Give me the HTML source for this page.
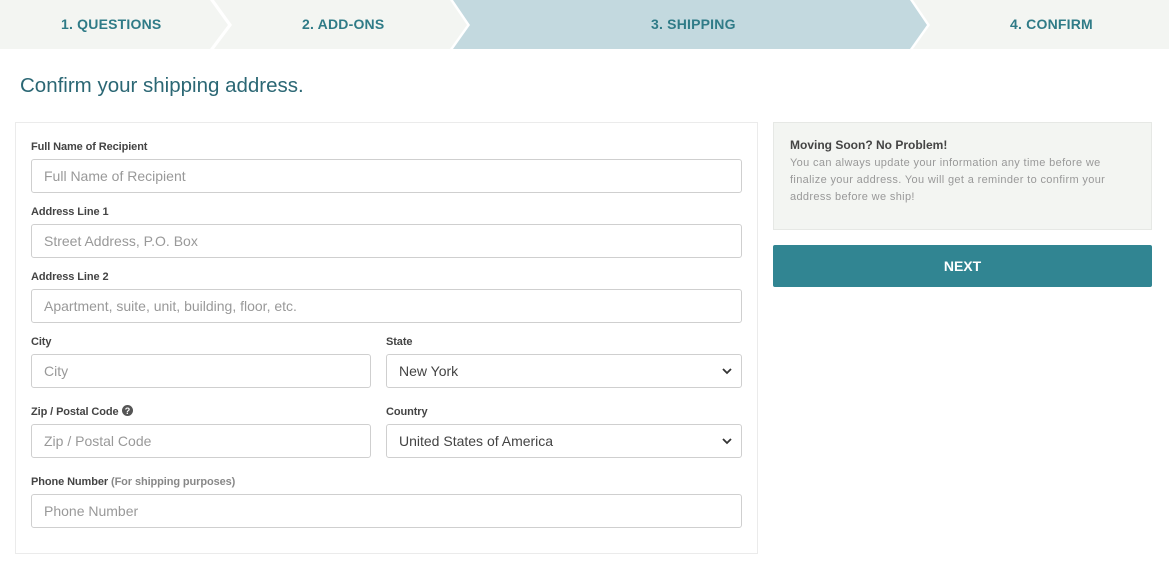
<!DOCTYPE html>
<html><head><style>
*{box-sizing:border-box;margin:0;padding:0}
body{width:1169px;height:561px;background:#fff;font-family:"Liberation Sans",sans-serif;position:relative;overflow:hidden}
.tabs{position:absolute;left:0;top:0;width:1169px;height:49px}
.tl{position:absolute;top:0;height:49px;line-height:49px;font-weight:bold;font-size:14px;color:#2f7b87;letter-spacing:0.2px}
.card{position:absolute;left:15px;top:122px;width:743px;height:432px;border:1px solid #ebebeb}
.lab{position:absolute;font-size:11px;color:#444;font-weight:bold;letter-spacing:-0.1px}
.lab span{color:#888;font-weight:bold}
.inp{position:absolute;height:34px;border:1px solid #cfcfcf;border-radius:3px;font-size:14px;color:#999;padding-left:12px;line-height:32px}
.sel{color:#444}
.sel svg{position:absolute;right:9px;top:12px}
h1{position:absolute;left:20px;top:74px;font-weight:normal;font-size:20.5px;color:#2b6774}
</style></head><body>
<svg class="tabs" width="1169" height="49">
<polygon points="0,0 210,0 228,25 210,49 0,49" fill="#f3f5f2"/>
<polygon points="214,0 450,0 467,25 450,49 214,49 232,25" fill="#f3f5f2"/>
<polygon points="453,0 910,0 927,25 910,49 453,49 470,25" fill="#c3d9df"/>
<polygon points="913,0 1169,0 1169,49 913,49 930,25" fill="#f3f5f2"/>
</svg>
<div class="tl" style="left:61px">1. QUESTIONS</div>
<div class="tl" style="left:302px">2. ADD-ONS</div>
<div class="tl" style="left:651px">3. SHIPPING</div>
<div class="tl" style="left:1010px">4. CONFIRM</div>
<h1>Confirm your shipping address.</h1>
<div class="card"></div>
<div class="lab" style="left:31px;top:141px">Full Name of Recipient</div>
<div class="inp" style="left:31px;top:159px;width:711px">Full Name of Recipient</div>
<div class="lab" style="left:31px;top:206px">Address Line 1</div>
<div class="inp" style="left:31px;top:224px;width:711px">Street Address, P.O. Box</div>
<div class="lab" style="left:31px;top:271px">Address Line 2</div>
<div class="inp" style="left:31px;top:289px;width:711px">Apartment, suite, unit, building, floor, etc.</div>
<div class="lab" style="left:31px;top:336px">City</div>
<div class="inp" style="left:31px;top:354px;width:340px">City</div>
<div class="lab" style="left:386px;top:336px">State</div>
<div class="inp sel" style="left:386px;top:354px;width:356px">New York<svg width="10" height="8"><path d="M1 2l4 4 4-4" stroke="#333" stroke-width="1.8" fill="none"/></svg></div>
<div class="lab" style="left:31px;top:405px">Zip / Postal Code <svg width="11" height="11" style="vertical-align:-1px"><circle cx="5.5" cy="5.5" r="5.5" fill="#555"/><text x="5.5" y="9" font-size="9" font-weight="bold" fill="#fff" text-anchor="middle" font-family="Liberation Sans">?</text></svg></div>
<div class="inp" style="left:31px;top:424px;width:340px">Zip / Postal Code</div>
<div class="lab" style="left:386px;top:406px">Country</div>
<div class="inp sel" style="left:386px;top:424px;width:356px">United States of America<svg width="10" height="8"><path d="M1 2l4 4 4-4" stroke="#333" stroke-width="1.8" fill="none"/></svg></div>
<div class="lab" style="left:31px;top:476px">Phone Number <span>(For shipping purposes)</span></div>
<div class="inp" style="left:31px;top:494px;width:711px">Phone Number</div>
<div style="position:absolute;left:773px;top:122px;width:379px;height:108px;background:#f3f5f2;border:1px solid #e6e8e5;padding:15px 20px 14px 16px">
<div style="font-size:12px;color:#444;font-weight:bold;margin-bottom:3px">Moving Soon? No Problem!</div>
<div style="font-size:11px;color:#999;line-height:17px;letter-spacing:0.35px;white-space:nowrap">You can always update your information any time before we<br>finalize your address. You will get a reminder to confirm your<br>address before we ship!</div>
</div>
<div style="position:absolute;left:773px;top:245px;width:379px;height:42px;background:#318592;border-radius:2px;color:#fff;font-weight:bold;font-size:14px;text-align:center;line-height:42px">NEXT</div>
</body></html>
